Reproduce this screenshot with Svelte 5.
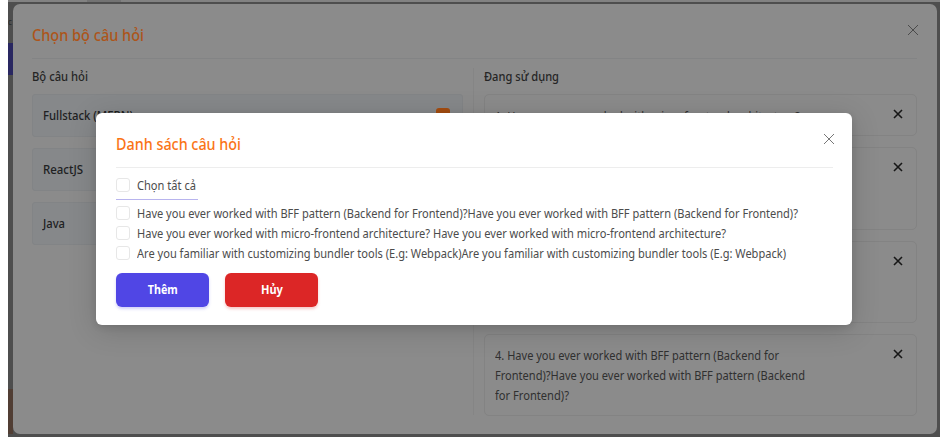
<script>
  const sets = [
    { name: 'Fullstack (MERN)', width: 90, marked: true },
    { name: 'ReactJS', width: 40 },
    { name: 'Java', width: 22 }
  ];
  const used = [
    { height: 42, lines: [['1. Have you ever worked with micro-frontend architecture?', 305]] },
    { height: 83, lines: [] },
    { height: 82, lines: [] },
    {
      height: 82,
      lines: [
        ['4. Have you ever worked with BFF pattern (Backend for', 284],
        ['Frontend)?Have you ever worked with BFF pattern (Backend', 310],
        ['for Frontend)?', 74]
      ]
    }
  ];
  const questions = [
    ['Have you ever worked with BFF pattern (Backend for Frontend)?Have you ever worked with BFF pattern (Backend for Frontend)?', 661],
    ['Have you ever worked with micro-frontend architecture? Have you ever worked with micro-frontend architecture?', 589],
    ['Are you familiar with customizing bundler tools (E.g: Webpack)Are you familiar with customizing bundler tools (E.g: Webpack)', 649]
  ];

  // Condenses a text run horizontally so it fills the given width.
  function fit(node, width) {
    const apply = () => {
      node.style.transform = 'none';
      node.style.transform = `scaleX(${width / node.getBoundingClientRect().width})`;
    };
    apply();
    document.fonts.ready.then(apply);
  }
</script>

<div class="page">
  <i class="edge top"></i>
  <i class="edge tab"></i>
  <i class="edge menu"></i>
  <i class="edge letter">c</i>
  <i class="edge warm"></i>

  <section class="outer">
    <header>
      <h2><span class="fit" use:fit={112}>Chọn bộ câu hỏi</span></h2>
      <svg class="close" viewBox="0 0 12 12"><path d="M1 1L11 11M11 1L1 11" /></svg>
    </header>
    <div class="columns">
      <div class="left">
        <h3><span class="fit" use:fit={56}>Bộ câu hỏi</span></h3>
        {#each sets as s}
          <div class="set">
            <span class="fit" use:fit={s.width}>{s.name}</span>
            {#if s.marked}<b class="mark"></b>{/if}
          </div>
        {/each}
      </div>
      <div class="right">
        <h3><span class="fit" use:fit={75}>Đang sử dụng</span></h3>
        {#each used as u}
          <div class="card" style="height:{u.height}px">
            <div class:single={u.lines.length === 1}>
              {#each u.lines as [text, width]}
                <div class="line"><span class="fit" use:fit={width}>{text}</span></div>
              {/each}
            </div>
            <svg class="remove" viewBox="0 0 10 10"><path d="M1 1L9 9M9 1L1 9" /></svg>
          </div>
        {/each}
      </div>
    </div>
  </section>

  <section class="dialog">
    <header>
      <h2><span class="fit" use:fit={125}>Danh sách câu hỏi</span></h2>
      <svg class="close" viewBox="0 0 12 12"><path d="M1 1L11 11M11 1L1 11" /></svg>
    </header>
    <div class="all"><i class="box"></i><span class="fit" use:fit={59}>Chọn tất cả</span></div>
    {#each questions as [text, width]}
      <div class="row"><i class="box"></i><span class="fit" use:fit={width}>{text}</span></div>
    {/each}
    <div class="buttons">
      <button class="add"><span class="fit" use:fit={30}>Thêm</span></button>
      <button class="cancel"><span class="fit" use:fit={22}>Hủy</span></button>
    </div>
  </section>
</div>

<style>
  :global(body) { background: #fff; }
  * { box-sizing: border-box; }
  .page {
    position: relative;
    width: 932px;
    height: 437px;
    margin-left: 8px;
    padding: 4px 3px 3px 4.5px;
    background: #4e4e4e;
    overflow: hidden;
    font: 12px/20px "Noto Sans", "Open Sans", sans-serif;
  }
  h2, h3 { margin: 0; font-weight: 500; }
  .fit { display: inline-block; white-space: nowrap; transform-origin: 0 50%; }
  .edge { position: absolute; left: 0; }
  .top { top: 0; width: 932px; height: 2px; background: #828282; }
  .tab { top: 0; left: 79px; width: 34px; height: 2px; background: #737373; }
  .menu { top: 43px; width: 5px; height: 32px; background: #292761; }
  .letter { top: 12px; left: 0; font-size: 8px; color: #292929; font-style: normal; }
  .warm { top: 389px; width: 5px; height: 45px; background: #513e34; }

  .outer {
    position: relative;
    height: 430px;
    padding: 0 20.5px 0 19.5px;
    background: #8b8b8b;
    border-radius: 7px;
  }
  .outer header {
    display: flex;
    justify-content: space-between;
    height: 55px;
    border-bottom: 1px solid #838485;
    padding-top: 20px;
  }
  .outer h2 { font-size: 16px; line-height: 22px; color: #ad551a; }
  .close { width: 12px; height: 12px; fill: none; stroke-width: 1; }
  .outer .close { stroke: #4b4b4b; margin: 0 -2px 0 0; }
  .columns { display: flex; height: 356px; padding-top: 9px; }
  .left { width: 442px; padding-right: 10px; border-right: 1px solid #858585; height: 347px; }
  .right { flex: 1; padding-left: 10px; }
  h3 { font-size: 12px; line-height: 18px; height: 25.5px; color: #252525; }
  .set {
    display: flex;
    height: 43px;
    margin-bottom: 11px;
    padding: 11px 12px 0 10px;
    background: #86888a;
    border: 1px solid #828486;
    border-radius: 3px;
    color: #202122;
    font-weight: 500;
  }
  .mark { width: 14px; height: 14px; margin: 2px 0 0 auto; flex: none; border-radius: 3px; background: #a54d10; }
  .set .fit { flex: none; }
  .card {
    display: flex;
    justify-content: space-between;
    margin-bottom: 11px;
    padding: 11px 13px 0 10px;
    border: 1px solid #838383;
    border-radius: 5px;
    color: #303030;
  }
  .card > div { width: 330px; }
  .card > .single { padding-top: 1px; }
  .line { height: 20px; }
  .remove { width: 10px; height: 10px; margin-top: 3.5px; fill: none; stroke: #171717; stroke-width: 1.6; flex: none; }

  .dialog {
    position: absolute;
    left: 88.4px;
    top: 113px;
    width: 756px;
    height: 212px;
    padding: 0 19px 0 20px;
    background: #fff;
    border-radius: 6px;
    box-shadow: 0 5px 28px #0000002b, 0 2px 7px #0000001a;
    color: #4c4c4c;
  }
  .dialog header {
    display: flex;
    justify-content: space-between;
    height: 55px;
    padding-top: 20px;
    border-bottom: 1px solid #ededed;
  }
  .dialog h2 { font-size: 16px; line-height: 22px; color: #fa7416; }
  .dialog .close { stroke: #777; margin: -0.5px -1.5px 0 0; }
  .all {
    display: flex;
    width: 82px;
    height: 32px;
    padding-top: 8px;
    margin-bottom: 4px;
    border-bottom: 1px solid #b8b4ee;
  }
  .row { display: flex; height: 20px; }
  .box {
    flex: none;
    width: 14px;
    height: 14px;
    margin: 2px 6.5px 0 0;
    border: 1px solid #e7e7e7;
    border-radius: 3px;
  }
  .all .fit, .row .fit { flex: none; }
  .buttons { display: flex; gap: 16px; padding-top: 9px; }
  button {
    width: 93px;
    height: 34px;
    padding: 0;
    border: 0;
    border-radius: 6px;
    color: #fff;
    font: 700 12px/20px "Noto Sans", "Open Sans", sans-serif;
  }
  button .fit { transform-origin: 50% 50%; }
  .add { background: #5046e5; box-shadow: 0 2px 3px #5046e540; }
  .cancel { background: #dc2626; box-shadow: 0 2px 3px #dc262640; }
</style>
